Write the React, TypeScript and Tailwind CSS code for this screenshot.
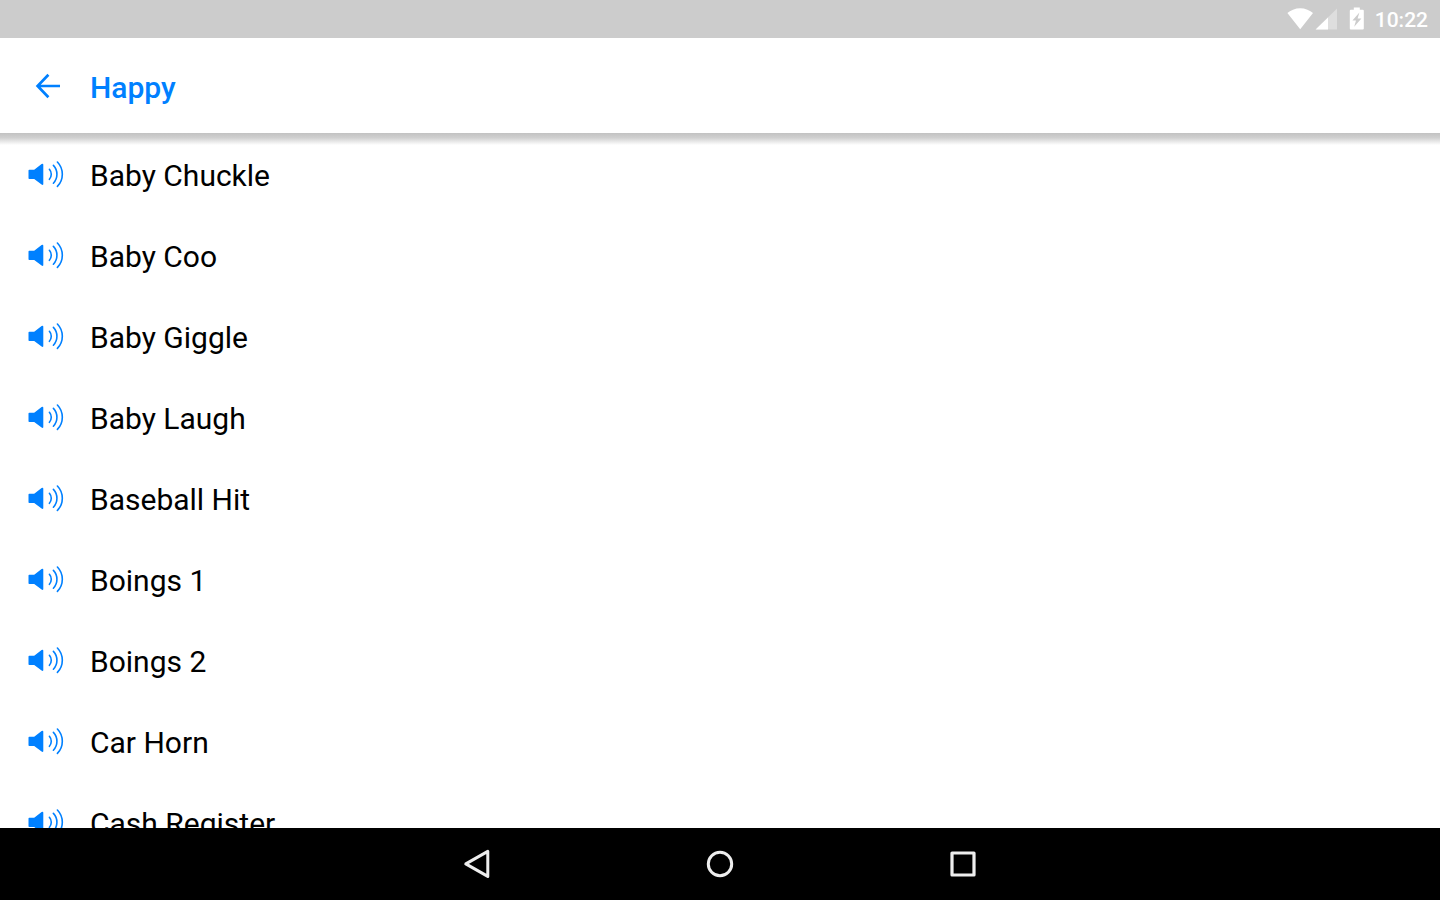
const sounds = [
  "Baby Chuckle",
  "Baby Coo",
  "Baby Giggle",
  "Baby Laugh",
  "Baseball Hit",
  "Boings 1",
  "Boings 2",
  "Car Horn",
  "Cash Register",
];

function SpeakerIcon() {
  return (
    <svg aria-hidden="true" className="h-7 w-9 shrink-0" viewBox="0 0 36 28" fill="none">
      <path
        d="M1.3 9.7H6.2L13.6 4Q15.3 3 15.3 4.7V23.9Q15.3 25.7 13.6 24.6L6.2 19.1H1.3Q.5 19.1 .5 18.3V10.5Q.5 9.7 1.3 9.7Z"
        fill="#0080ff"
      />
      <g stroke="#0080ff" strokeWidth="1.6" strokeLinecap="round">
        <path d="M21.4 9.3A7.6 7.6 0 0 1 21.4 19.3" />
        <path d="M25.4 5.4A13 13 0 0 1 25.4 23.2" />
        <path d="M29.4 2A17.6 17.6 0 0 1 29.4 26.4" />
      </g>
    </svg>
  );
}

function StatusBar() {
  return (
    <div className="flex h-[38px] shrink-0 items-center justify-end bg-[#cccccc] pr-3 text-white">
      <svg aria-label="Wi-Fi" className="h-6 w-7" viewBox="0 0 28 24">
        <path d="M.4 6.1Q2.6 4 6 2.7Q13.2 -.1 20.4 2.7Q23.8 4 26 6.1L13.2 22.2Z" fill="white" />
      </svg>
      <svg aria-label="Mobile signal" className="h-6 w-6" viewBox="0 0 24 24">
        <path d="M22 1.5V22.6H.6Z" fill="white" fillOpacity=".35" />
        <path d="M13 10.4V22.6H.6Z" fill="white" />
      </svg>
      <svg aria-label="Battery charging" className="ml-2.5 h-6 w-4" viewBox="0 0 16 24">
        <path
          fillRule="evenodd"
          d="M4.8 .6H10.8V2.8H13.8Q14.8 2.8 14.8 3.8V21.6Q14.8 22.6 13.8 22.6H1.8Q.8 22.6 .8 21.6V3.8Q.8 2.8 1.8 2.8H4.8ZM10.4 5.4L3.4 13.4H7L5.2 19.8L12.4 11.4H8.6Z"
          fill="white"
        />
      </svg>
      <time className="ml-2.5 pt-0.5 text-[21px] leading-6 font-medium">10:22</time>
    </div>
  );
}

export default function App() {
  return (
    <div className="flex h-screen flex-col overflow-hidden bg-white font-['Roboto',sans-serif] text-black">
      <StatusBar />
      <header className="relative z-10 flex h-[95px] shrink-0 items-center bg-white pl-[34px]">
        <button type="button" aria-label="Back" className="flex h-7 w-7">
          <svg className="h-7 w-7" viewBox="0 0 28 28" fill="none" stroke="#0080ff" strokeWidth="2.7">
            <path d="M26 14H4M14.4 2.8L3.6 14L14.4 25.2" />
          </svg>
        </button>
        <h1 className="ml-7 pt-1 text-[30px] leading-9 font-medium text-[#0080ff]">Happy</h1>
        <div className="pointer-events-none absolute inset-x-0 top-full h-3 bg-linear-to-b from-[#c2c2c2] via-[#d0d0d0] via-40% to-transparent" />
      </header>
      <main className="min-h-0 flex-1 overflow-y-auto [scrollbar-width:none]">
        <ul>
          {sounds.map((sound) => (
            <li key={sound}>
              <button type="button" className="flex h-[81px] w-full items-center gap-[26px] pl-7 text-left">
                <SpeakerIcon />
                <span className="pt-1 text-[30px] leading-9">{sound}</span>
              </button>
            </li>
          ))}
        </ul>
      </main>
      <nav aria-label="System" className="flex h-[72px] shrink-0 items-center justify-center gap-[207px] bg-black">
        <button type="button" aria-label="Back" className="h-9 w-9">
          <svg viewBox="0 0 36 36" fill="none" stroke="#eeeeee" strokeWidth="3" strokeLinejoin="round">
            <path d="M28.8 5.4V30.4L6.8 17.9Z" />
          </svg>
        </button>
        <button type="button" aria-label="Home" className="h-9 w-9">
          <svg viewBox="0 0 36 36" fill="none" stroke="#eeeeee" strokeWidth="3">
            <circle cx="18" cy="18" r="11.7" />
          </svg>
        </button>
        <button type="button" aria-label="Recent apps" className="h-9 w-9">
          <svg viewBox="0 0 36 36" fill="none" stroke="#eeeeee" strokeWidth="3.2" strokeLinejoin="round">
            <path d="M7 7H29V29H7Z" />
          </svg>
        </button>
      </nav>
    </div>
  );
}
